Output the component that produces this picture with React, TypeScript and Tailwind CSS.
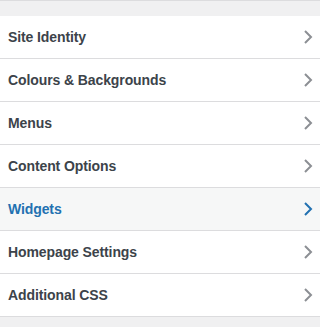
import React from "react";

const items = [
  "Site Identity",
  "Colours & Backgrounds",
  "Menus",
  "Content Options",
  "Widgets",
  "Homepage Settings",
  "Additional CSS",
];

function Chevron({ active }: { active: boolean }) {
  return (
    <svg width="10" height="16" viewBox="0 0 10 16" className="shrink-0">
      <polyline
        points="2,2 8,8 2,14"
        fill="none"
        stroke={active ? "#2271b1" : "#8c8f94"}
        strokeWidth="2"
      />
    </svg>
  );
}

export default function App() {
  return (
    <div
      className="w-[320px] h-[327px] bg-[#f0f0f1] flex flex-col"
      style={{ fontFamily: '"Liberation Sans", Arial, sans-serif' }}
    >
      <div className="h-[16px] border-t border-[#dcdcde] shrink-0" />
      <ul className="flex flex-col">
        {items.map((label) => {
          const active = label === "Widgets";
          return (
            <li
              key={label}
              className={`h-[43px] flex items-center justify-between pl-[8px] pr-[7px] border-b border-[#dcdcde] ${
                active ? "bg-[#f6f7f7] text-[#2271b1]" : "bg-white text-[#3c434a]"
              }`}
            >
              <span className="text-[14px] font-bold tracking-[-0.1px]">{label}</span>
              <Chevron active={active} />
            </li>
          );
        })}
      </ul>
    </div>
  );
}
